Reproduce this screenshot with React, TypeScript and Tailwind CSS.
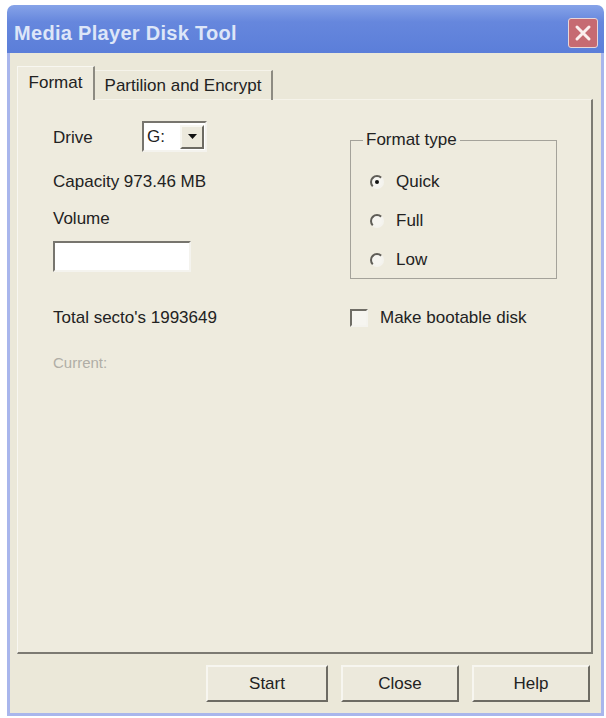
import React from 'react'

const font = { fontFamily: '"Liberation Sans", Arial, sans-serif' }

function Radio({ checked, label }: { checked?: boolean; label: string }) {
  return (
    <div className="flex h-[20px] items-center">
      <span className="relative ml-[19px] h-[14px] w-[14px] rounded-full border-[2px] border-b-[#f4f3ee] border-l-[#5f5d57] border-r-[#f4f3ee] border-t-[#5f5d57] bg-[#f6f5f0]">
        {checked && <span className="absolute left-[3px] top-[3px] h-[4px] w-[4px] rounded-full bg-[#111]" />}
      </span>
      <span className="ml-[12px] text-[17px] text-[#222]">{label}</span>
    </div>
  )
}

function Button({ label, w }: { label: string; w: string }) {
  return (
    <div
      className={`${w} flex h-[37px] items-center justify-center border-[2px] border-b-[#6d6b63] border-l-[#f7f6f0] border-r-[#6d6b63] border-t-[#f7f6f0] bg-[#ece9dc] text-[17px] text-[#222]`}
    >
      {label}
    </div>
  )
}

export default function App() {
  return (
    <div className="h-[718px] w-[606px] bg-white pl-[7px] pt-[5px]" style={font}>
      <div className="flex h-[711px] w-[597px] flex-col">
        {/* Title bar */}
        <div className="flex h-[48px] items-center justify-between rounded-t-[7px] bg-[linear-gradient(180deg,#86a3e8_0%,#6687dd_35%,#5b7ed9_100%)] pl-[7px] pr-[6px] pt-[8px]">
          <span className="text-[20px] font-bold tracking-[0.3px] text-[#dde6f8]">Media Player Disk Tool</span>
          <div className="flex h-[30px] w-[30px] items-center justify-center rounded-[3px] border border-[#e8d6d8] bg-[#c66a72]">
            <svg width="18" height="18" viewBox="0 0 18 18">
              <path d="M3 3 L15 15 M15 3 L3 15" stroke="#fbeeee" strokeWidth="3" strokeLinecap="round" />
            </svg>
          </div>
        </div>

        {/* Body */}
        <div className="flex flex-1 flex-col border-x-[3px] border-b-[3px] border-[#a9b6ec] bg-[#ebe8d9] pl-[7px] pr-[8px] pt-[13px]">
          {/* Tabs */}
          <div className="relative z-10 flex h-[34px] items-end">
            <div className="flex h-[34px] w-[78px] items-center justify-center border-r-[2px] border-t border-l border-[#f8f7f1] border-r-[#8d8b82] bg-[#eeebde] pb-[2px] text-[17px] text-[#222]">
              Format
            </div>
            <div className="flex h-[30px] w-[178px] items-center justify-center border-r-[2px] border-t border-[#f5f3ea] border-r-[#8d8b82] text-[17px] text-[#222]">
              Partilion and Encrypt
            </div>
          </div>

          {/* Panel */}
          <div className="-mt-px flex h-[555px] w-[576px] border-b-[2px] border-l border-r-[2px] border-t border-b-[#7c7a72] border-l-[#f8f7f1] border-r-[#7c7a72] border-t-[#f5f3ea] bg-[#eeebde]">
            <div className="flex w-[332px] flex-col pl-[35px] pt-[21px] text-[17px] text-[#222]">
              <div className="flex h-[31px] items-center">
                <span className="mt-[3px] w-[89px]">Drive</span>
                <div className="flex h-[31px] w-[65px] items-center justify-between border-[2px] border-b-[#f4f3ee] border-l-[#77756e] border-r-[#f4f3ee] border-t-[#77756e] bg-white pl-[3px] pr-[1px]">
                  <span>G:</span>
                  <div className="flex h-[24px] w-[24px] items-center justify-center border-[2px] border-b-[#6d6b63] border-l-[#f7f6f0] border-r-[#6d6b63] border-t-[#f7f6f0] bg-[#ece9dc]">
                    <svg width="9" height="6" viewBox="0 0 9 6">
                      <path d="M0 0 H9 L4.5 5 Z" fill="#111" />
                    </svg>
                  </div>
                </div>
              </div>
              <div className="mt-[20px] h-[20px] leading-[20px]">Capacity 973.46 MB</div>
              <div className="mt-[17px] h-[20px] leading-[20px]">Volume</div>
              <div className="mt-[12px] h-[31px] w-[138px] border-[2px] border-b-[#f4f3ee] border-l-[#77756e] border-r-[#f4f3ee] border-t-[#77756e] bg-white" />
              <div className="mt-[36px] h-[20px] leading-[20px]">Total secto's 1993649</div>
              <div className="mt-[25px] h-[20px] text-[15px] leading-[20px] text-[#b0aea6]">Current:</div>
            </div>

            <div className="flex flex-col pt-[30px]">
              <fieldset className="h-[149px] w-[207px] border border-[#a4a29a] pt-[22px] leading-[20px]">
                <legend className="ml-[12px] px-[3px] text-[17px] text-[#222]">Format type</legend>
                <div className="flex flex-col gap-[19px]">
                  <Radio checked label="Quick" />
                  <Radio label="Full" />
                  <Radio label="Low" />
                </div>
              </fieldset>
              <div className="mt-[29px] flex h-[20px] items-center">
                <span className="h-[18px] w-[18px] border-[2px] border-b-[#f4f3ee] border-l-[#6f6d66] border-r-[#f4f3ee] border-t-[#6f6d66] bg-[#f6f5f0]" />
                <span className="ml-[12px] text-[17px] text-[#222]">Make bootable disk</span>
              </div>
            </div>
          </div>

          {/* Buttons */}
          <div className="mt-[11px] flex justify-end gap-[13px] pr-[3px]">
            <Button label="Start" w="w-[122px]" />
            <Button label="Close" w="w-[118px]" />
            <Button label="Help" w="w-[118px]" />
          </div>
        </div>
      </div>
    </div>
  )
}
